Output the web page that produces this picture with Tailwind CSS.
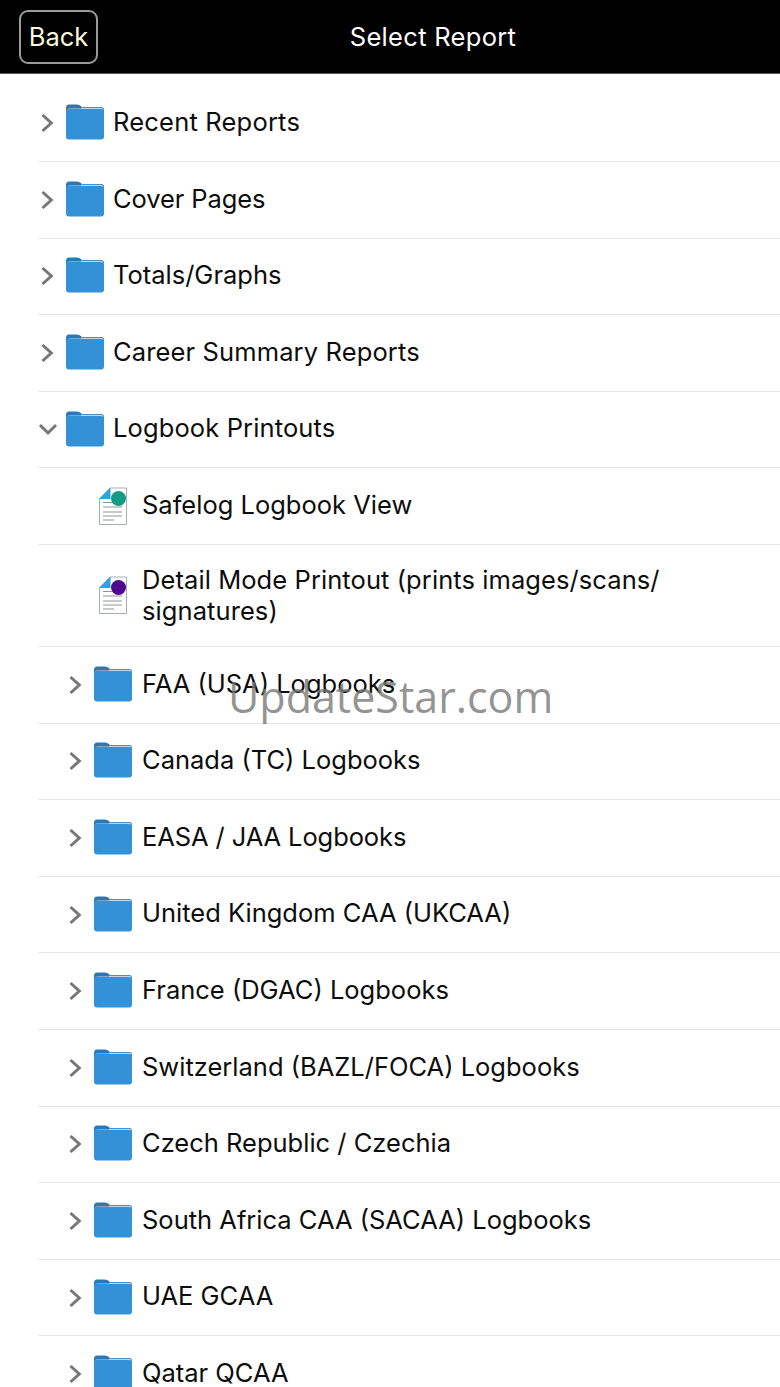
<!DOCTYPE html>
<html lang="en">
<head>
<meta charset="utf-8">
<script src="https://cdn.jsdelivr.net/npm/@tailwindcss/browser@4"></script>
<title>Select Report</title>
</head>
<body class="bg-white">
<svg class="hidden">
<symbol id="folder" viewBox="0 0 38 36"><path d="M0 4 Q0 0.5 3 0.5 H11 Q14 0.5 16 3 H35 Q38 3 38 6 V10 H0 Z" fill="#2a78b8"/><path d="M0 7.5 Q0 5 3 5 H35 Q38 5 38 7.5 V32.5 Q38 35.5 35 35.5 H3 Q0 35.5 0 32.5 Z" fill="#3391d8"/><path d="M15 3.7 H35 Q37 3.7 37.6 6 Q36.5 5 34 5 H3 Q1.5 5 0.8 5.6 Q1.5 4.5 4 4.4 H15 Z" fill="#b9d7ee"/></symbol>
<symbol id="chev" viewBox="0 0 14 20"><path d="M2.5 2 L11.3 10 L2.5 18" fill="none" stroke="#777" stroke-width="3"/></symbol>
<symbol id="down" viewBox="0 0 20 14"><path d="M2 3 L10 11 L18 3" fill="none" stroke="#777" stroke-width="3"/></symbol>
<symbol id="doc" viewBox="0 0 29 38"><path d="M12 1 H28.5 V37.5 H1.5 V12 Z" fill="#fff" stroke="#a9adaf" stroke-width="1"/><path d="M12.5 0.5 V12 H1 Z" fill="#2ba3e2"/><g stroke="#8f9497" stroke-width="1"><path d="M5 15.5 H17"/><path d="M5 20 H24"/><path d="M5 25 H24"/><path d="M5 29 H24"/><path d="M5 33 H16"/></g></symbol>
</svg>
<div class="relative w-[780px] h-[1387px] overflow-hidden bg-white font-['Inter','Liberation_Sans',sans-serif] text-[25.5px] text-[#0d0d0d]">
  <header class="relative flex items-center justify-center h-[74px] bg-black border-b border-[#555]">
    <button class="absolute left-[19px] top-[10px] w-[79px] h-[54px] rounded-[9px] border-2 border-[#9a9a9a] text-[#fbfbdc]">Back</button>
    <h1 class="ml-[86px] mt-[2px] text-white tracking-[0.3px]">Select Report</h1>
  </header>
  <main class="pt-[10px] pl-[38px]">
    <ul>
      <li class="flex items-center h-[78px] pb-[1px] border-b border-[#e6e6e6]"><svg class="w-[14px] h-[20px] ml-[2px] mr-[12px] mt-[2px]"><use href="#chev"/></svg><svg class="w-[38px] h-[36px] mr-[9px]"><use href="#folder"/></svg><span class="tracking-[0.2px]">Recent Reports</span></li>
      <li class="flex items-center h-[76.6px] pb-[2px] border-b border-[#e6e6e6]"><svg class="w-[14px] h-[20px] ml-[2px] mr-[12px] mt-[2px]"><use href="#chev"/></svg><svg class="w-[38px] h-[36px] mr-[9px]"><use href="#folder"/></svg><span class="tracking-[-0.1px]">Cover Pages</span></li>
      <li class="flex items-center h-[76.6px] pb-[2px] border-b border-[#e6e6e6]"><svg class="w-[14px] h-[20px] ml-[2px] mr-[12px] mt-[2px]"><use href="#chev"/></svg><svg class="w-[38px] h-[36px] mr-[9px]"><use href="#folder"/></svg><span>Totals/Graphs</span></li>
      <li class="flex items-center h-[76.6px] pb-[2px] border-b border-[#e6e6e6]"><svg class="w-[14px] h-[20px] ml-[2px] mr-[12px] mt-[2px]"><use href="#chev"/></svg><svg class="w-[38px] h-[36px] mr-[9px]"><use href="#folder"/></svg><span class="tracking-[0.13px]">Career Summary Reports</span></li>
      <li class="flex items-center h-[76.6px] pb-[2px] border-b border-[#e6e6e6]"><svg class="w-[20px] h-[14px] mr-[8px]"><use href="#down"/></svg><svg class="w-[38px] h-[36px] mr-[9px]"><use href="#folder"/></svg><span class="tracking-[0.12px]">Logbook Printouts</span></li>
      <li class="flex items-center h-[76.6px] pb-[2px] border-b border-[#e6e6e6] pl-[60px]"><span class="relative w-[29px] h-[38px] mr-[15px] mt-[2px]"><svg class="w-[29px] h-[38px]"><use href="#doc"/></svg><span class="absolute left-[13px] top-[4px] w-[15px] h-[15px] rounded-full bg-[#149b86]"></span></span><span>Safelog Logbook View</span></li>
      <li class="flex items-center h-[102px] border-b border-[#e6e6e6] pl-[60px]"><span class="relative w-[29px] h-[38px] mr-[15px]"><svg class="w-[29px] h-[38px]"><use href="#doc"/></svg><span class="absolute left-[13px] top-[4px] w-[15px] h-[15px] rounded-full bg-[#4f0a8c]"></span></span><span class="w-[560px] leading-[31px] tracking-[0.08px]">Detail Mode Printout (prints images/scans/ signatures)</span></li>
      <li class="flex items-center h-[76.6px] pb-[2px] border-b border-[#e6e6e6] pl-[28px]"><svg class="w-[14px] h-[20px] ml-[2px] mr-[12px] mt-[2px]"><use href="#chev"/></svg><svg class="w-[38px] h-[36px] mr-[10px]"><use href="#folder"/></svg><span>FAA (USA) Logbooks</span></li>
      <li class="flex items-center h-[76.6px] pb-[2px] border-b border-[#e6e6e6] pl-[28px]"><svg class="w-[14px] h-[20px] ml-[2px] mr-[12px] mt-[2px]"><use href="#chev"/></svg><svg class="w-[38px] h-[36px] mr-[10px]"><use href="#folder"/></svg><span>Canada (TC) Logbooks</span></li>
      <li class="flex items-center h-[76.6px] pb-[2px] border-b border-[#e6e6e6] pl-[28px]"><svg class="w-[14px] h-[20px] ml-[2px] mr-[12px] mt-[2px]"><use href="#chev"/></svg><svg class="w-[38px] h-[36px] mr-[10px]"><use href="#folder"/></svg><span class="tracking-[-0.1px]">EASA / JAA Logbooks</span></li>
      <li class="flex items-center h-[76.6px] pb-[2px] border-b border-[#e6e6e6] pl-[28px]"><svg class="w-[14px] h-[20px] ml-[2px] mr-[12px] mt-[2px]"><use href="#chev"/></svg><svg class="w-[38px] h-[36px] mr-[10px]"><use href="#folder"/></svg><span>United Kingdom CAA (UKCAA)</span></li>
      <li class="flex items-center h-[76.6px] pb-[2px] border-b border-[#e6e6e6] pl-[28px]"><svg class="w-[14px] h-[20px] ml-[2px] mr-[12px] mt-[2px]"><use href="#chev"/></svg><svg class="w-[38px] h-[36px] mr-[10px]"><use href="#folder"/></svg><span>France (DGAC) Logbooks</span></li>
      <li class="flex items-center h-[76.6px] pb-[2px] border-b border-[#e6e6e6] pl-[28px]"><svg class="w-[14px] h-[20px] ml-[2px] mr-[12px] mt-[2px]"><use href="#chev"/></svg><svg class="w-[38px] h-[36px] mr-[10px]"><use href="#folder"/></svg><span>Switzerland (BAZL/FOCA) Logbooks</span></li>
      <li class="flex items-center h-[76.6px] pb-[2px] border-b border-[#e6e6e6] pl-[28px]"><svg class="w-[14px] h-[20px] ml-[2px] mr-[12px] mt-[2px]"><use href="#chev"/></svg><svg class="w-[38px] h-[36px] mr-[10px]"><use href="#folder"/></svg><span>Czech Republic / Czechia</span></li>
      <li class="flex items-center h-[76.6px] pb-[2px] border-b border-[#e6e6e6] pl-[28px]"><svg class="w-[14px] h-[20px] ml-[2px] mr-[12px] mt-[2px]"><use href="#chev"/></svg><svg class="w-[38px] h-[36px] mr-[10px]"><use href="#folder"/></svg><span>South Africa CAA (SACAA) Logbooks</span></li>
      <li class="flex items-center h-[76.6px] pb-[2px] border-b border-[#e6e6e6] pl-[28px]"><svg class="w-[14px] h-[20px] ml-[2px] mr-[12px] mt-[2px]"><use href="#chev"/></svg><svg class="w-[38px] h-[36px] mr-[10px]"><use href="#folder"/></svg><span>UAE GCAA</span></li>
      <li class="flex items-center h-[76.6px] pb-[2px] border-b border-[#e6e6e6] pl-[28px]"><svg class="w-[14px] h-[20px] ml-[2px] mr-[12px] mt-[2px]"><use href="#chev"/></svg><svg class="w-[38px] h-[36px] mr-[10px]"><use href="#folder"/></svg><span>Qatar QCAA</span></li>
    </ul>
  </main>
  <div class="absolute left-[228px] top-[671px] text-[43px] leading-[52px] text-[#777]/80 font-['Open_Sans',sans-serif] whitespace-nowrap">UpdateStar.com</div>
</div>
</body>
</html>
